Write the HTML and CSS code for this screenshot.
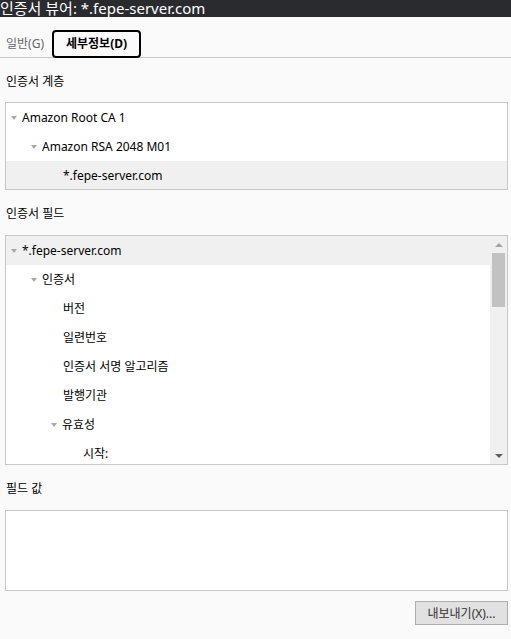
FILE: index.html
```html
<!DOCTYPE html>
<html lang="ko">
<head>
<meta charset="utf-8">
<title>인증서 뷰어</title>
<link rel="stylesheet" href="styles.css">
</head>
<body>
<div class="titlebar">인증서 뷰어: *.fepe-server.com</div>
<div class="tabs">
  <div class="tab">일반(G)</div>
  <div class="tab tab-active">세부정보(D)</div>
</div>
<div class="content">
  <div class="label">인증서 계층</div>
  <div class="tree tree-hier">
    <div class="row lv1"><span class="twisty"></span>Amazon Root CA 1</div>
    <div class="row lv2"><span class="twisty"></span>Amazon RSA 2048 M01</div>
    <div class="row lv3 selected">*.fepe-server.com</div>
  </div>
  <div class="label">인증서 필드</div>
  <div class="tree tree-fields">
    <div class="rows">
      <div class="row lv1 selected"><span class="twisty"></span>*.fepe-server.com</div>
      <div class="row lv2"><span class="twisty"></span>인증서</div>
      <div class="row lv3">버전</div>
      <div class="row lv3">일련번호</div>
      <div class="row lv3">인증서 서명 알고리즘</div>
      <div class="row lv3">발행기관</div>
      <div class="row lv3"><span class="twisty"></span>유효성</div>
      <div class="row lv4">시작:</div>
    </div>
    <div class="scrollbar">
      <div class="arrow arrow-up"></div>
      <div class="track"><div class="thumb"></div></div>
      <div class="arrow arrow-down"></div>
    </div>
  </div>
  <div class="label">필드 값</div>
  <div class="valuebox"></div>
  <div class="actions">
    <button class="btn">내보내기(X)...</button>
  </div>
</div>
</body>
</html>
```
FILE: styles.css
```css
html, body {
  margin: 0;
  padding: 0;
  background: #fafafa;
  color: #000;
  font-family: "Noto Sans", "Noto Sans CJK KR", sans-serif;
  font-size: 12px;
}
.titlebar {
  height: 17px;
  line-height: 17px;
  background: #2a2b2f;
  color: #fff;
  font-size: 15px;
  white-space: nowrap;
}
.tabs {
  box-sizing: border-box;
  height: 41px;
  border-bottom: 1px solid #c8c8c8;
  display: flex;
  align-items: flex-end;
  padding-left: 6px;
}
.tab {
  height: 28px;
  line-height: 28px;
  color: #666;
  margin-bottom: -1px;
}
.tab-active {
  box-sizing: border-box;
  width: 89px;
  margin-left: 8px;
  border: 2px solid #000;
  border-radius: 4px;
  color: #000;
  font-weight: bold;
  text-align: center;
  line-height: 23px;
  background: #fafafa;
}
.content {
  padding: 0 3px 0 5px;
  display: flex;
  flex-direction: column;
}
.label {
  height: 45px;
  line-height: 47px;
  padding-left: 1px;
}
.content > .label:first-child {
  height: 44px;
  line-height: 47px;
}
.tree {
  border: 1px solid #c8c8c8;
  background: #fff;
}
.tree-hier .row:last-child {
  height: 28px;
}
.tree-fields {
  height: 228px;
  display: flex;
  overflow: hidden;
}
.rows {
  flex: 1;
}
.row {
  height: 29px;
  line-height: 29px;
  white-space: nowrap;
}
.row.selected {
  background: #f0f0f0;
}
.lv1 { padding-left: 17px; }
.lv2 { padding-left: 37px; }
.lv3 { padding-left: 57px; }
.lv4 { padding-left: 77px; }
.twisty {
  display: inline-block;
  width: 0;
  height: 0;
  border-left: 3.5px solid transparent;
  border-right: 3.5px solid transparent;
  border-top: 4px solid #a8a8a8;
  margin-left: -12px;
  margin-right: 5px;
  vertical-align: middle;
  position: relative;
  top: -1px;
}
.scrollbar {
  width: 17px;
  background: #f0f0f0;
  display: flex;
  flex-direction: column;
  align-items: center;
}
.arrow {
  height: 17px;
  width: 17px;
  display: flex;
  align-items: center;
  justify-content: center;
}
.arrow::after {
  content: "";
  width: 0;
  height: 0;
  border-left: 4px solid transparent;
  border-right: 4px solid transparent;
}
.arrow-up::after {
  border-bottom: 4px solid #a3a3a3;
}
.arrow-down::after {
  border-top: 4px solid #606060;
}
.track {
  flex: 1;
  width: 13px;
}
.thumb {
  height: 54px;
  background: #c2c2c2;
}
.valuebox {
  height: 79px;
  border: 1px solid #c8c8c8;
  background: #fff;
}
.actions {
  display: flex;
  justify-content: flex-end;
  padding-top: 10px;
}
.btn {
  width: 93px;
  height: 24px;
  border: 1px solid #adadad;
  background: #e1e1e1;
  color: #333;
  font-family: "Noto Sans", "Noto Sans CJK KR", sans-serif;
  font-size: 12px;
  padding: 0;
}
```
